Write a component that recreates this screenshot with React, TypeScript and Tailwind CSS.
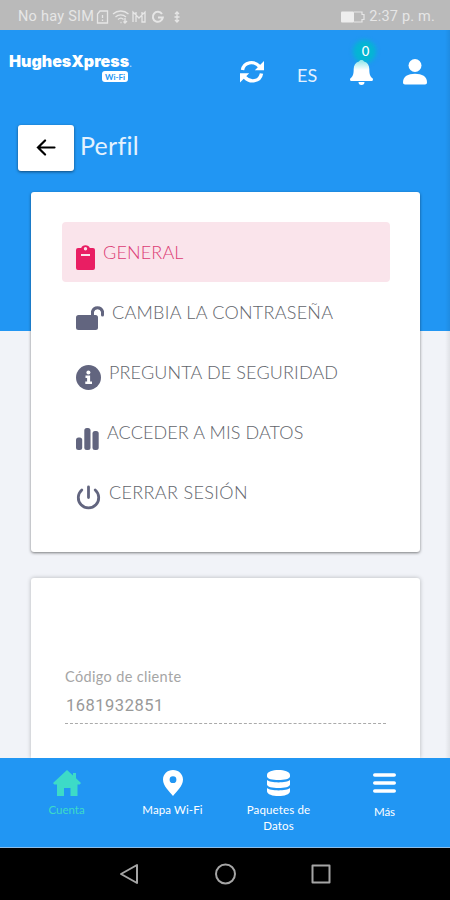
import type { ReactNode } from "react";

function ClipboardIcon() {
  return (
    <svg className="h-[25px] w-[19px]" viewBox="0 0 19 25" fill="#e91e63">
      <path
        fillRule="evenodd"
        d="M2 3h3.200a4.500 4 0 0 1 8.600 0H17a2 2 0 0 1 2 2v18a2 2 0 0 1-2 2H2a2 2 0 0 1-2-2V5a2 2 0 0 1 2-2Zm7.500-1a1.700 1.700 0 1 0 0 3.400 1.700 1.700 0 0 0 0-3.400ZM5 9v2h9V9Z"
      />
    </svg>
  );
}

function LockOpenIcon() {
  return (
    <svg className="h-[25px] w-[28px]" viewBox="0 0 28 25" fill="#62657f">
      <rect x="0" y="10" width="22" height="15" rx="2.500" />
      <path d="M16.500 11V6.500a5.200 5 0 0 1 10 0V10" fill="none" stroke="#62657f" strokeWidth="3" strokeLinecap="round" />
    </svg>
  );
}

function InfoIcon() {
  return (
    <svg className="h-[25px] w-[25px]" viewBox="0 0 25 25">
      <circle cx="12.500" cy="12.500" r="12.500" fill="#62657f" />
      <circle cx="12.400" cy="7.600" r="2" fill="#fff" />
      <path d="M9.500 10.600h4.600v6H16V19H9.300v-2.400h1.800v-3.600H9.500Z" fill="#fff" />
    </svg>
  );
}

function ChartIcon() {
  return (
    <svg className="h-[22px] w-[23px]" viewBox="0 0 23 22" fill="#62657f">
      <rect x="0" y="9.500" width="6.200" height="12.500" rx="2.500" />
      <rect x="8.300" y="0" width="6.200" height="22" rx="2.500" />
      <rect x="16.500" y="3" width="6.200" height="19" rx="2.500" />
    </svg>
  );
}

function PowerIcon() {
  return (
    <svg className="h-[25px] w-[25px]" viewBox="0 0 25 25" fill="none" stroke="#62657f" strokeWidth="2.800" strokeLinecap="round">
      <path d="M12.500 2v10.500M5.800 5a10.200 10.200 0 1 0 13.400 0" />
    </svg>
  );
}

function SyncIcon() {
  return (
    <svg className="h-6 w-[26px]" viewBox="0 0 26 24" fill="none" stroke="#fff" strokeWidth="3.400">
      <path d="M3.500 10C5 1.500 15 .5 20.500 6.500M22.500 13.500C21 22 11 23 5.500 17" />
      <path d="M25 1v9.200h-9.200ZM1 22.500v-9.200h9.200Z" fill="#fff" stroke="none" />
    </svg>
  );
}

function BellIcon() {
  return (
    <svg className="h-[25px] w-[23px]" viewBox="0 0 23 25">
      <defs>
        <linearGradient id="bell" x1="0" y1="0" x2="0" y2="1">
          <stop offset="0" stopColor="#8be5e8" />
          <stop offset=".4" stopColor="#fff" />
        </linearGradient>
      </defs>
      <path
        fill="url(#bell)"
        d="M11.500 0c1.300 0 2.200.7 2.500 1.500 3.600 1 5.300 4 5.300 7.500 0 6 1.200 7.700 3.200 9.300.9.900.4 2.700-.8 2.700H1.300C.1 21-.4 19.200.5 18.300 2.500 16.700 3.700 15 3.700 9c0-3.500 1.700-6.500 5.300-7.500C9.300.7 10.200 0 11.500 0ZM8.500 22h6a3 3 0 0 1-6 0Z"
      />
    </svg>
  );
}

function UserIcon() {
  return (
    <svg className="h-[26px] w-[24px]" viewBox="0 0 24 26" fill="#fff">
      <circle cx="12" cy="6.500" r="6.500" />
      <path d="M0 23.500C0 17.500 5 14.800 12 14.800s12 2.700 12 8.700c0 1.300-.8 2-2 2H2c-1.200 0-2-.7-2-2Z" />
    </svg>
  );
}

function HomeIcon() {
  return (
    <svg className="h-[26px] w-[28px]" viewBox="0 0 28 26" fill="#3ddbc7">
      <path d="M14 0l6 5.500V3h3v5.300l5 4.700-1.300 1.600H24.500V26h-7v-8h-6.500v8h-7V14.600H1.300L0 13Z" />
    </svg>
  );
}

function PinIcon() {
  return (
    <svg className="h-[26px] w-5" viewBox="0 0 20 26" fill="#fff">
      <path fillRule="evenodd" d="M10 0c5.700 0 10 4.200 10 9.500C20 16 13.500 21.500 10 26 6.500 21.500 0 16 0 9.500 0 4.200 4.300 0 10 0Zm0 6.300a3.400 3.400 0 1 0 0 6.800 3.400 3.400 0 0 0 0-6.800Z" />
    </svg>
  );
}

function DatabaseIcon() {
  return (
    <svg className="h-[26px] w-[23px]" viewBox="0 0 23 26" fill="#fff">
      <path d="M0 5C0-1.600 23-1.600 23 5v1.500c0 4.800-23 4.800-23 0ZM0 10c3 3.200 20 3.200 23 0v4.500c0 4.800-23 4.800-23 0ZM0 18c3 3.200 20 3.200 23 0v3.200c0 6.400-23 6.400-23 0Z" />
    </svg>
  );
}

function MenuIcon() {
  return (
    <svg className="h-5 w-[23px]" viewBox="0 0 23 20" fill="none" stroke="#fff" strokeWidth="3.600" strokeLinecap="round">
      <path d="M1.800 2h19.400M1.800 10h19.400M1.800 18h19.400" />
    </svg>
  );
}

function StatusBar() {
  return (
    <div className="flex h-[30px] shrink-0 items-center bg-[#bababa] pl-[18px] pr-[15px] pt-[3px] font-[Roboto] text-[#e6e6e6]">
      <span className="w-[77px] whitespace-nowrap text-[14.500px] tracking-[0.250px]">No hay SIM</span>
      <svg className="ml-px h-4 w-[88px]" viewBox="0 0 88 16" fill="none" stroke="#e6e6e6" strokeWidth="1.300">
        <path d="M4 2h7.500v12H1.500V5ZM6.500 6v3M6.500 10.500V12" />
        <path d="M17 5c4.500-4 11-4 15.500 0M19.500 8c3-2.800 7.500-2.800 10.500 0M22 10.500c2-1.700 4-1.700 5.500 0M24.500 13.500h1M29 9v5M27.500 12.500 29 14l2-2" />
        <path d="M37 13V3l6 6 6-6v10h-3V3M40 13V3" />
        <path d="M66 5a5 5 0 1 0 .8 3.500H62" strokeWidth="2" />
        <path d="M81 3v10M79 5l2-2 2 2M79 11l2 2 2-2M78.500 8h5" />
      </svg>
      <svg className="ml-auto h-3 w-6" viewBox="0 0 24 12">
        <rect x="0" y="0.500" width="13" height="11" rx="1" fill="#eee" />
        <path d="M13 1h8v2.500h2v5h-2V11h-8" fill="none" stroke="#e6e6e6" strokeWidth="1.200" />
      </svg>
      <span className="ml-[4px] whitespace-nowrap text-[14.500px] tracking-[0.200px]">2:37 p. m.</span>
    </div>
  );
}

function Header() {
  return (
    <header className="flex h-[90px] shrink-0 items-start text-white">
      <div className="ml-[9px] mt-[21px] flex w-[125px] flex-col">
        <span className="whitespace-nowrap font-[Inter] text-[16px] font-black leading-5">
          HughesXpress<span className="text-[8px] text-[#a9d6fb]">.</span>
        </span>
        <span className="-mt-[3px] ml-[93px] flex h-[11px] w-[26px] items-center justify-center rounded-[3px] bg-white text-[8px] font-bold text-[#2196f3]">
          Wi-Fi
        </span>
      </div>
      <div className="ml-[105px] mt-[30px]">
        <SyncIcon />
      </div>
      <span className="ml-[32px] mt-[33px] w-[22px] text-[18px] leading-6 text-[#e4f2fe]">ES</span>
      <div className="relative ml-[31px] mt-[30px]">
        <span className="absolute -top-[20px] left-[3px] h-[23px] w-[23px] rounded-full bg-[#04b5d3] blur-[2px]" />
        <div className="relative">
          <BellIcon />
        </div>
        <span className="absolute -top-[17px] left-0 w-[31px] text-center text-[13px] font-medium leading-4">0</span>
      </div>
      <div className="ml-[30px] mt-[29px]">
        <UserIcon />
      </div>
    </header>
  );
}

type MenuItem = { label: string; icon: ReactNode; tracking: string; active?: boolean };

const menu: MenuItem[] = [
  { label: "GENERAL", icon: <ClipboardIcon />, tracking: "tracking-[0.150px]", active: true },
  { label: "CAMBIA LA CONTRASEÑA", icon: <LockOpenIcon />, tracking: "tracking-[0.260px]" },
  { label: "PREGUNTA DE SEGURIDAD", icon: <InfoIcon />, tracking: "tracking-[0.140px]" },
  { label: "ACCEDER A MIS DATOS", icon: <ChartIcon />, tracking: "tracking-[0.100px]" },
  { label: "CERRAR SESIÓN", icon: <PowerIcon />, tracking: "tracking-[0.350px]" },
];

function ProfileMenu() {
  return (
    <nav className="ml-[31px] mr-[30px] h-[360px] shrink-0 rounded-[3px] bg-white pl-[31px] pr-[30px] pt-[30px] shadow-[0_1px_3px_rgba(0,0,0,0.5)]">
      {menu.map((item) => (
        <div
          key={item.label}
          className={`flex h-[60px] rounded-[4px] pl-[14px] ${item.active ? "bg-[#fae4eb] text-[#dc3c75]" : "text-[#62656c]"}`}
        >
          <div className="flex h-[48px] items-end">{item.icon}</div>
          <span className={`ml-[8px] mt-[18px] whitespace-nowrap text-[18px] font-light leading-6 ${item.tracking}`}>
            {item.label}
          </span>
        </div>
      ))}
    </nav>
  );
}

function ClientCard() {
  return (
    <section className="ml-[31px] mr-[30px] mt-[26px] flex-1 rounded-t-[3px] bg-white px-[34px] pt-[89px] text-[#999] shadow-[0_0_4px_rgba(0,0,0,0.25)]">
      <p className="text-[14.500px] leading-5 tracking-[0.350px] text-[#a5a5a5]">Código de cliente</p>
      <p className="ml-px mt-[9px] font-[Roboto] text-[16.500px] leading-5 tracking-[0.500px]">1681932851</p>
      <div className="mt-[7px] border-b border-dashed border-[#aaa]" />
    </section>
  );
}

function TabBar() {
  const tab = "flex w-[106px] flex-col items-center text-center text-[11.500px] leading-4";
  return (
    <nav className="flex h-[90px] shrink-0 border-b border-[#8cbde8] bg-[#2196f3] pl-[13.500px] pt-[12px] text-white">
      <div className={`${tab} text-[#3ddbc7]`}>
        <HomeIcon />
        <span className="mt-[6px]">Cuenta</span>
      </div>
      <div className={tab}>
        <PinIcon />
        <span className="mt-[6px] tracking-[0.100px]">Mapa Wi-Fi</span>
      </div>
      <div className={tab}>
        <DatabaseIcon />
        <span className="mt-[6px] w-[70px] tracking-[0.150px]">Paquetes de Datos</span>
      </div>
      <div className={tab}>
        <span className="mt-[3px]">
          <MenuIcon />
        </span>
        <span className="mt-[11px]">Más</span>
      </div>
    </nav>
  );
}

function SystemNav() {
  return (
    <div className="flex h-[52px] shrink-0 bg-black">
      <svg className="ml-[118px] mt-[15px] h-[22px] w-[214px]" viewBox="0 0 214 22" fill="none" stroke="#a5a5a5" strokeWidth="2" strokeLinejoin="round">
        <path d="M19 2v18L3 11Z" />
        <circle cx="107.500" cy="11" r="9.500" />
        <rect x="194.500" y="2.500" width="17" height="17" />
      </svg>
    </div>
  );
}

export default function App() {
  return (
    <div className="flex h-[900px] w-[450px] flex-col overflow-hidden bg-white font-[Lato,sans-serif]">
      <StatusBar />
      <main className="flex flex-1 flex-col overflow-hidden bg-[linear-gradient(to_left,rgba(0,0,0,0.07),transparent_5px),linear-gradient(#2196f3_0_301px,#f1f3f8_301px)]">
        <Header />
        <div className="flex h-[72px] shrink-0 pl-[18px] pt-[5px]">
          <button className="flex h-[46px] w-[56px] items-center justify-center rounded-[3px] bg-white shadow-[0_1px_3px_rgba(0,0,0,0.5)]">
            <svg className="mb-px mr-px h-[17px] w-5" viewBox="0 0 20 18" fill="none" stroke="#000" strokeWidth="2.300" strokeLinecap="round">
              <path d="M19 9H1.500M9 1.500 1.500 9 9 16.500" />
            </svg>
          </button>
          <h1 className="ml-[6px] mt-[4px] text-[25px] leading-8 tracking-[0.250px] text-[#e4f2fe]">Perfil</h1>
        </div>
        <ProfileMenu />
        <ClientCard />
      </main>
      <TabBar />
      <SystemNav />
    </div>
  );
}
